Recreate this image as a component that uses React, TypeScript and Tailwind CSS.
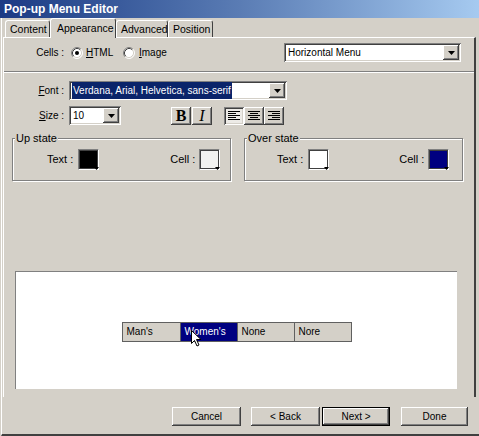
import React from "react";

const raised =
  "shadow-[inset_-1px_-1px_0_#404040,inset_1px_1px_0_#ffffff,inset_-2px_-2px_0_#808080]";
const sunken =
  "shadow-[inset_1px_1px_0_#808080,inset_-1px_-1px_0_#ffffff,inset_2px_2px_0_#404040,inset_-2px_-2px_0_#d4d0c8]";

function Arrow() {
  return (
    <svg width="7" height="4" viewBox="0 0 7 4">
      <path d="M0 0h7L3.5 4z" fill="#000" />
    </svg>
  );
}

function DropButton() {
  return (
    <div
      className={`w-[16px] h-full bg-[#d4d0c8] flex items-center justify-center shrink-0 ${raised}`}
    >
      <Arrow />
    </div>
  );
}

function Radio({ checked }: { checked?: boolean }) {
  return (
    <svg width="12" height="12" viewBox="0 0 12 12" className="shrink-0">
      <circle cx="6" cy="6" r="5" fill="#fff" />
      <path d="M2.11 9.89A5.5 5.5 0 0 1 9.89 2.11" stroke="#808080" fill="none" />
      <path d="M9.89 2.11A5.5 5.5 0 0 1 2.11 9.89" stroke="#fff" fill="none" />
      <path d="M2.82 9.18A4.5 4.5 0 0 1 9.18 2.82" stroke="#404040" fill="none" />
      <path d="M9.18 2.82A4.5 4.5 0 0 1 2.82 9.18" stroke="#d4d0c8" fill="none" />
      {checked && <circle cx="6" cy="6" r="2" fill="#000" />}
    </svg>
  );
}

function Swatch({ color }: { color: string }) {
  return (
    <div className="relative w-[21px] h-[21px] border border-t-[#808080] border-l-[#808080] border-b-white border-r-white shrink-0">
      <div className="w-full h-full border border-[#404040]" style={{ backgroundColor: color }} />
      <svg width="5" height="3" viewBox="0 0 5 3" className="absolute right-[-1px] bottom-[-1px]">
        <path d="M0 0h5L2.5 3z" fill="#000" />
      </svg>
    </div>
  );
}

function AlignIcon({ mode }: { mode: "left" | "center" | "right" }) {
  const short = mode === "left" ? 0 : mode === "center" ? 2 : 4;
  const rows = [
    [0, 12],
    [short, 8],
    [0, 12],
    [short, 8],
    [0, 12],
  ];
  return (
    <svg width="12" height="10" viewBox="0 0 12 10">
      {rows.map(([x, w], i) => (
        <rect key={i} x={x} y={i * 2} width={w} height="1" fill="#000" />
      ))}
    </svg>
  );
}

function Group({ title, textColor, cellColor, left, cellGap }: {
  title: string;
  textColor: string;
  cellColor: string;
  left: string;
  cellGap: string;
}) {
  return (
    <div className="relative w-[219px] h-[43px] border border-[#808080] shadow-[1px_1px_0_#ffffff,inset_1px_1px_0_#ffffff]">
      <span className="absolute -top-[7px] left-[2px] px-px bg-[#d4d0c8] leading-[13px] text-[11px]">{title}</span>
      <div className={`flex items-center pt-[10px] ${left}`}>
        <span className="text-[11px]">Text :</span>
        <div className="ml-[5px]">
          <Swatch color={textColor} />
        </div>
        <span className={`text-[11px] ${cellGap}`}>Cell :</span>
        <div className="ml-[4px]">
          <Swatch color={cellColor} />
        </div>
      </div>
    </div>
  );
}

function Tab({ label, width, active }: { label: string; width: string; active?: boolean }) {
  return (
    <div
      className={`${width} flex items-center rounded-t-[3px] border-t border-l border-white border-r border-r-[#404040] text-[10.5px] ${
        active
          ? "h-[20px] relative z-10 -mb-px pl-[6px] bg-[#d4d0c8]"
          : "h-[17px] pl-[4px]"
      }`}
    >
      {label}
    </div>
  );
}

export default function App() {
  return (
    <div className="w-[479px] h-[436px] bg-[#d4d0c8] flex flex-col font-['Liberation_Sans',Arial,sans-serif] text-[10px] text-black leading-none overflow-hidden">
      {/* Title bar */}
      <div className="h-[18px] shrink-0 flex items-center pl-[4px] bg-gradient-to-r from-[#1c3a84] via-[#5a7cb4] to-[#a6caf0] text-white font-bold text-[12px]">
        Pop-up Menu Editor
      </div>

      <div className="flex-1 ml-px border-l border-white flex flex-col border-b-2 border-b-[#404040]">
        {/* Tabs */}
        <div className="pl-[3px] h-[19px] flex items-end">
          <Tab label="Content" width="w-[45px]" />
          <Tab label="Appearance" width="w-[66px]" active />
          <Tab label="Advanced" width="w-[52px]" />
          <Tab label="Position" width="w-[45px]" />
        </div>

        {/* Panel */}
        <div className="ml-px mr-[3px] h-[360px] border-t border-l border-white border-r-2 border-r-[#404040] flex flex-col">
          {/* Cells row */}
          <div className="mt-[5px] h-[19px] flex items-center">
            <span className="w-[60px] text-right">Cells :</span>
            <div className="ml-[7px] w-[52px] flex items-center gap-[3px]">
              <Radio checked />
              <span>
                <span className="underline">H</span>TML
              </span>
            </div>
            <div className="flex items-center gap-[4px]">
              <Radio />
              <span>
                <span className="underline">I</span>mage
              </span>
            </div>
            <div className={`ml-auto mr-[13px] w-[177px] h-[19px] bg-white flex items-center p-[2px] ${sunken}`}>
              <span className="flex-1 pl-[2px]">Horizontal Menu</span>
              <DropButton />
            </div>
          </div>

          <div className="mt-[9px] border-t border-[#808080] border-b border-b-white" />

          {/* Font row */}
          <div className="mt-[8px] h-[19px] flex items-center">
            <span className="w-[60px] text-right">
              <span className="underline">F</span>ont :
            </span>
            <div className={`ml-[5px] w-[218px] h-[19px] bg-white flex items-center p-[2px] ${sunken}`}>
              <div className="flex-1 pl-px">
                <span className="bg-[#0a246a] text-white px-px py-[3px]">
                  Verdana, Arial, Helvetica, sans-serif
                </span>
              </div>
              <DropButton />
            </div>
          </div>

          {/* Size row */}
          <div className="mt-[6px] h-[19px] flex items-center">
            <span className="w-[60px] text-right">
              <span className="underline">S</span>ize :
            </span>
            <div className={`ml-[5px] w-[52px] h-[19px] bg-white flex items-center p-[2px] ${sunken}`}>
              <span className="flex-1 pl-[2px]">10</span>
              <DropButton />
            </div>
            <div className={`ml-[50px] w-[20px] h-[18px] flex items-center justify-center font-['Liberation_Serif',serif] font-bold text-[16px] ${raised}`}>
              B
            </div>
            <div className={`ml-px w-[20px] h-[18px] flex items-center justify-center font-['Liberation_Serif',serif] italic text-[16px] ${raised}`}>
              I
            </div>
            <div className={`ml-[12px] w-[20px] h-[18px] flex items-center justify-center bg-[#edebe7] ${sunken}`}>
              <AlignIcon mode="left" />
            </div>
            <div className={`w-[20px] h-[18px] flex items-center justify-center ${raised}`}>
              <AlignIcon mode="center" />
            </div>
            <div className={`w-[20px] h-[18px] flex items-center justify-center ${raised}`}>
              <AlignIcon mode="right" />
            </div>
          </div>

          {/* State groups */}
          <div className="mt-[13px] ml-[8px] flex gap-[13px]">
            <Group title="Up state" textColor="#000000" cellColor="#f2f2f0" left="pl-[34px]" cellGap="ml-[71px]" />
            <Group title="Over state" textColor="#ffffff" cellColor="#000080" left="pl-[32px]" cellGap="ml-[70px]" />
          </div>

          {/* Preview */}
          <div className="relative mt-[90px] ml-[11px] w-[442px] h-[118px] bg-white border-t border-l border-[#808080] flex justify-center pt-[50px]">
            <div className="h-[20px] flex border border-[#606060] bg-[#d4d0c8]">
              {["Man's", "Women's", "None", "Nore"].map((m, i) => (
                <div
                  key={m}
                  className={`w-[57px] flex items-center pl-[4px] ${i > 0 ? "border-l border-[#606060]" : ""} ${
                    i === 1 ? "bg-[#000080] text-white" : ""
                  }`}
                >
                  {m}
                </div>
              ))}
            </div>
            <svg width="11" height="17" viewBox="0 0 11 17" className="absolute left-[175px] top-[58px]">
              <path d="M0.5 0.5v13l3-3 2.5 5.5 2-1-2.5-5.5h4.5z" fill="#fff" stroke="#000" />
            </svg>
          </div>
        </div>

        {/* Buttons */}
        <div className="mt-[10px] pl-[170px] flex">
          <div className={`w-[69px] h-[19px] flex items-center justify-center ${raised}`}>Cancel</div>
          <div className={`ml-[10px] w-[69px] h-[19px] flex items-center justify-center ${raised}`}>&lt; Back</div>
          <div className="ml-[2px] w-[68px] h-[19px] flex items-center justify-center border border-black shadow-[inset_-1px_-1px_0_#404040,inset_1px_1px_0_#ffffff,inset_-2px_-2px_0_#808080]">
            Next &gt;
          </div>
          <div className={`ml-[11px] w-[67px] h-[19px] flex items-center justify-center ${raised}`}>Done</div>
        </div>
      </div>
    </div>
  );
}
